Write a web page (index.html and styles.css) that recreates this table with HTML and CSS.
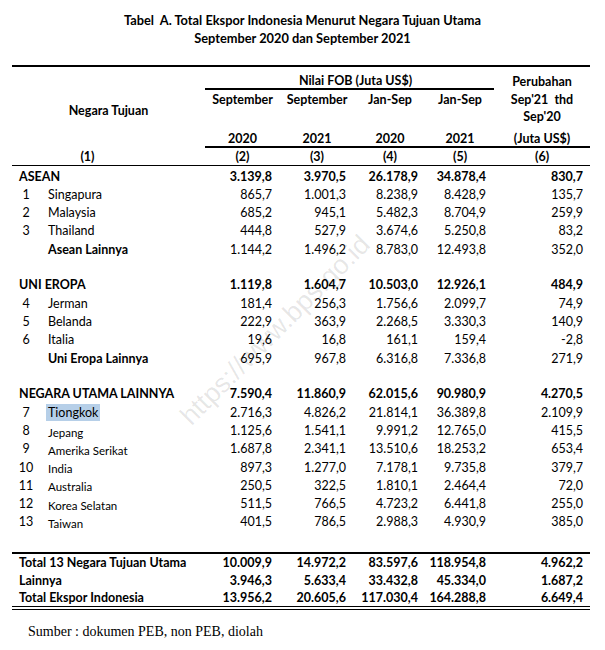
FILE: index.html
```html
<!DOCTYPE html>
<html lang="id">
<head>
<meta charset="utf-8">
<title>Tabel A. Total Ekspor Indonesia</title>
<link rel="stylesheet" href="styles.css">
</head>
<body>
<div class="page">
  <div class="title">
    <div>Tabel&nbsp; A. Total Ekspor Indonesia Menurut Negara Tujuan Utama</div>
    <div>September 2020 dan September 2021</div>
  </div>
  <table class="tbl">
    <colgroup>
      <col class="c-no"><col class="c-name"><col class="c-v2"><col class="c-v3"><col class="c-v4"><col class="c-v5"><col class="c-v6">
    </colgroup>
    <thead>
      <tr class="h1">
        <th colspan="2" rowspan="4" class="lbl">Negara Tujuan</th>
        <th colspan="4" class="fob">Nilai FOB (Juta US$)</th>
        <th>Perubahan</th>
      </tr>
      <tr class="h2">
        <th>September</th><th>September</th><th>Jan-Sep</th><th>Jan-Sep</th><th>Sep'21&nbsp; thd</th>
      </tr>
      <tr class="h3">
        <th></th><th></th><th></th><th></th><th>Sep'20</th>
      </tr>
      <tr class="h4">
        <th>2020</th><th>2021</th><th>2020</th><th>2021</th><th>(Juta US$)</th>
      </tr>
      <tr class="h5">
        <th colspan="2" class="one">(1)</th><th>(2)</th><th>(3)</th><th>(4)</th><th>(5)</th><th>(6)</th>
      </tr>
    </thead>
    <tbody>
      <tr class="row grp first"><td colspan="2" class="gname">ASEAN</td><td class="n">3.139,8</td><td class="n">3.970,5</td><td class="n">26.178,9</td><td class="n">34.878,4</td><td class="n">830,7</td></tr>
      <tr class="row"><td class="no">1</td><td class="name">Singapura</td><td class="n">865,7</td><td class="n">1.001,3</td><td class="n">8.238,9</td><td class="n">8.428,9</td><td class="n">135,7</td></tr>
      <tr class="row"><td class="no">2</td><td class="name">Malaysia</td><td class="n">685,2</td><td class="n">945,1</td><td class="n">5.482,3</td><td class="n">8.704,9</td><td class="n">259,9</td></tr>
      <tr class="row"><td class="no">3</td><td class="name">Thailand</td><td class="n">444,8</td><td class="n">527,9</td><td class="n">3.674,6</td><td class="n">5.250,8</td><td class="n">83,2</td></tr>
      <tr class="row"><td></td><td class="name b">Asean Lainnya</td><td class="n">1.144,2</td><td class="n">1.496,2</td><td class="n">8.783,0</td><td class="n">12.493,8</td><td class="n">352,0</td></tr>
      <tr class="blank"><td colspan="7"></td></tr>
      <tr class="row grp"><td colspan="2" class="gname">UNI EROPA</td><td class="n">1.119,8</td><td class="n">1.604,7</td><td class="n">10.503,0</td><td class="n">12.926,1</td><td class="n">484,9</td></tr>
      <tr class="row"><td class="no">4</td><td class="name">Jerman</td><td class="n">181,4</td><td class="n">256,3</td><td class="n">1.756,6</td><td class="n">2.099,7</td><td class="n">74,9</td></tr>
      <tr class="row"><td class="no">5</td><td class="name">Belanda</td><td class="n">222,9</td><td class="n">363,9</td><td class="n">2.268,5</td><td class="n">3.330,3</td><td class="n">140,9</td></tr>
      <tr class="row"><td class="no">6</td><td class="name">Italia</td><td class="n">19,6</td><td class="n">16,8</td><td class="n">161,1</td><td class="n">159,4</td><td class="n">-2,8</td></tr>
      <tr class="row"><td></td><td class="name b">Uni Eropa Lainnya</td><td class="n">695,9</td><td class="n">967,8</td><td class="n">6.316,8</td><td class="n">7.336,8</td><td class="n">271,9</td></tr>
      <tr class="blank"><td colspan="7"></td></tr>
      <tr class="row grp"><td colspan="2" class="gname">NEGARA UTAMA LAINNYA</td><td class="n">7.590,4</td><td class="n">11.860,9</td><td class="n">62.015,6</td><td class="n">90.980,9</td><td class="n">4.270,5</td></tr>
      <tr class="row"><td class="no">7</td><td class="name"><span class="hl">Tiongkok</span></td><td class="n">2.716,3</td><td class="n">4.826,2</td><td class="n">21.814,1</td><td class="n">36.389,8</td><td class="n">2.109,9</td></tr>
      <tr class="row"><td class="no">8</td><td class="name sm">Jepang</td><td class="n">1.125,6</td><td class="n">1.541,1</td><td class="n">9.991,2</td><td class="n">12.765,0</td><td class="n">415,5</td></tr>
      <tr class="row"><td class="no">9</td><td class="name sm">Amerika Serikat</td><td class="n">1.687,8</td><td class="n">2.341,1</td><td class="n">13.510,6</td><td class="n">18.253,2</td><td class="n">653,4</td></tr>
      <tr class="row"><td class="no">10</td><td class="name sm">India</td><td class="n">897,3</td><td class="n">1.277,0</td><td class="n">7.178,1</td><td class="n">9.735,8</td><td class="n">379,7</td></tr>
      <tr class="row"><td class="no">11</td><td class="name sm">Australia</td><td class="n">250,5</td><td class="n">322,5</td><td class="n">1.810,1</td><td class="n">2.464,4</td><td class="n">72,0</td></tr>
      <tr class="row"><td class="no">12</td><td class="name sm">Korea Selatan</td><td class="n">511,5</td><td class="n">766,5</td><td class="n">4.723,2</td><td class="n">6.441,8</td><td class="n">255,0</td></tr>
      <tr class="row"><td class="no">13</td><td class="name sm">Taiwan</td><td class="n">401,5</td><td class="n">786,5</td><td class="n">2.988,3</td><td class="n">4.930,9</td><td class="n">385,0</td></tr>
      <tr class="blank last-blank"><td colspan="7"></td></tr>
    </tbody>
    <tbody class="totals">
      <tr class="row grp"><td colspan="2" class="gname">Total 13 Negara Tujuan Utama</td><td class="n">10.009,9</td><td class="n">14.972,2</td><td class="n">83.597,6</td><td class="n">118.954,8</td><td class="n">4.962,2</td></tr>
      <tr class="row grp"><td colspan="2" class="gname">Lainnya</td><td class="n">3.946,3</td><td class="n">5.633,4</td><td class="n">33.432,8</td><td class="n">45.334,0</td><td class="n">1.687,2</td></tr>
      <tr class="row grp final"><td colspan="2" class="gname">Total Ekspor Indonesia</td><td class="n">13.956,2</td><td class="n">20.605,6</td><td class="n">117.030,4</td><td class="n">164.288,8</td><td class="n">6.649,4</td></tr>
    </tbody>
  </table>
  <p class="source">Sumber : dokumen PEB, non PEB, diolah</p>
  <div class="watermark">https://www.bps.go.id</div>
</div>
</body>
</html>
```

FILE: styles.css
```css
html, body {
  margin: 0;
  padding: 0;
  background: #fff;
}

.page {
  position: relative;
  width: 605px;
  height: 650px;
  overflow: hidden;
  font-family: Lato, "Open Sans", sans-serif;
  color: #000;
}

.title {
  padding-top: 11px;
  text-align: center;
  font-weight: bold;
  font-size: 12.8px;
  line-height: 18px;
}

.tbl {
  margin: 18px 0 0 12px;
  width: 578px;
  border-collapse: collapse;
  table-layout: fixed;
  border-top: 2px solid #000;
  font-size: 12.5px;
}

.c-no { width: 28px; }
.c-name { width: 165px; }
.c-v2 { width: 75px; }
.c-v3 { width: 74px; }
.c-v4 { width: 72px; }
.c-v5 { width: 68px; }
.c-v6 { width: 96px; }

.tbl th,
.tbl td {
  box-sizing: border-box;
  padding: 0;
  line-height: 15px;
  white-space: nowrap;
  vertical-align: middle;
}

.tbl th {
  font-weight: bold;
  text-align: center;
}

.tbl .h1 th { height: 23px; padding-top: 6px; }
.tbl .h1 th.lbl { padding-top: 6px; }
.tbl .h1 th.fob { border-bottom: 2px solid #000; padding-left: 12px; }
.tbl .h2 th { height: 19px; padding-top: 1px; }
.tbl .h3 th { height: 18px; padding-bottom: 1px; }
.tbl .h4 th { height: 21px; vertical-align: bottom; padding-bottom: 0; border-bottom: 2px solid #000; }
.tbl .h5 th { height: 18px; padding-top: 1px; border-bottom: 1px solid #000; }
.tbl .h5 th.one { padding-right: 42px; }

.tbl .row td { height: 18.3px; }
.tbl .row.first td { height: 20px; padding-top: 2px; }
.tbl .blank td { height: 17.5px; }
.tbl .last-blank td { height: 22px; }

.tbl .grp td { font-weight: bold; }
.tbl td.gname { padding-left: 7px; }
.tbl td.no { text-align: center; }
.tbl td.name { padding-left: 8px; }
.tbl td.name.b { font-weight: bold; }
.tbl td.name.sm { font-size: 11.5px; vertical-align: bottom; }
.tbl td.n { text-align: right; padding-right: 8px; }
.tbl td.n:last-child { padding-right: 7px; }

.hl { background: #b6cfe8; padding: 1px 2px; margin-left: -2px; }

.totals { border-top: 2px solid #000; }
.tbl .totals .row td { height: 18.5px; }
.tbl .totals .row:first-child td { height: 18px; padding-top: 0; }
.tbl .final td { border-bottom: 4px double #000; }

.source {
  margin: 13px 0 0 28px;
  font-family: "Liberation Serif", serif;
  font-size: 14px;
  line-height: 18px;
}

.watermark {
  position: absolute;
  left: 120px;
  top: 315px;
  width: 310px;
  text-align: center;
  transform: rotate(-45deg);
  font-family: "Liberation Sans", sans-serif;
  font-size: 27px;
  line-height: 30px;
  color: rgba(0, 0, 0, 0.1);
  pointer-events: none;
}
```
